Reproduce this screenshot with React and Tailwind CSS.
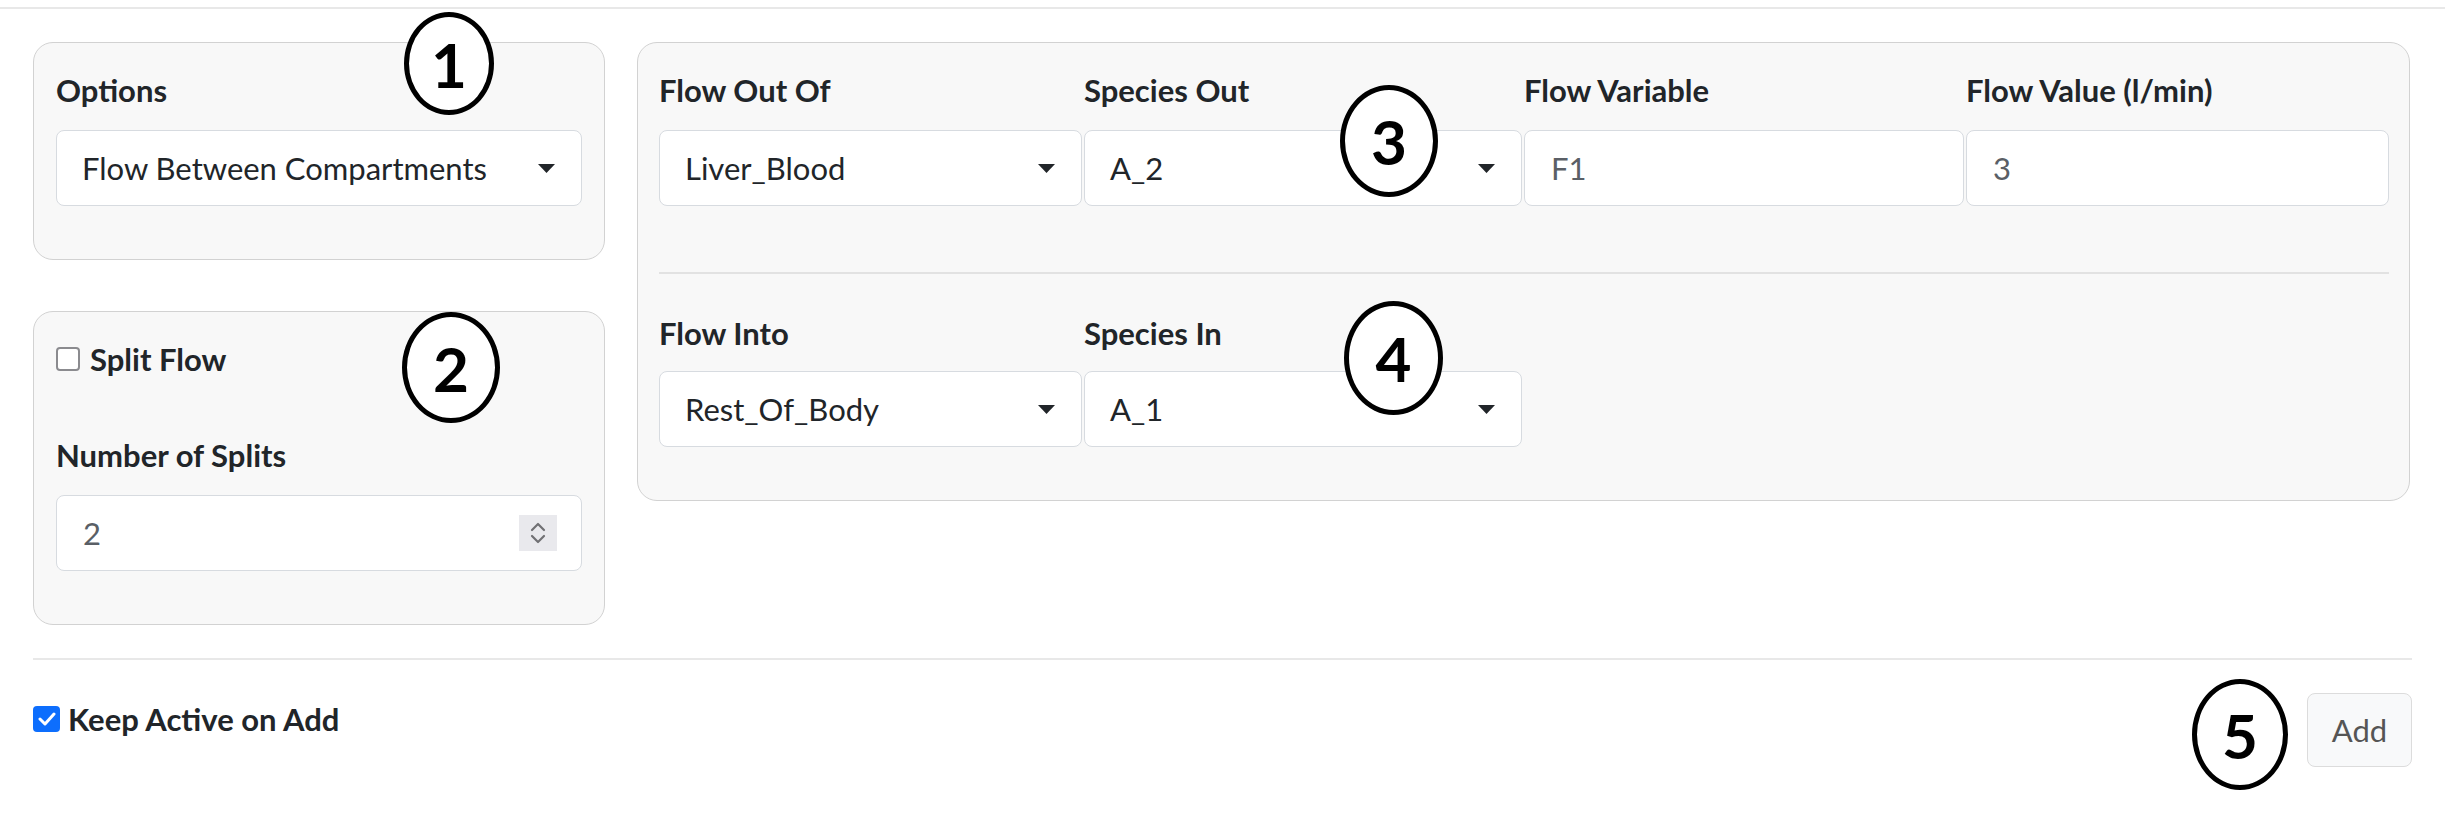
import React from 'react';

function Caret() {
  return (
    <svg width="17" height="9" viewBox="0 0 17 9">
      <path d="M0 0h17L8.5 9z" fill="#212529" />
    </svg>
  );
}

function Select({ value }) {
  return (
    <div className="flex h-[76px] items-center justify-between rounded-[8px] border border-[#d7dbe0] bg-white pl-[25px] pr-[26px] text-[31px] text-[#212529]">
      <span>{value}</span>
      <Caret />
    </div>
  );
}

function TextInput({ value, children }) {
  return (
    <div className="flex h-[76px] items-center justify-between rounded-[8px] border border-[#d7dbe0] bg-white pl-[26px] pr-[24px] text-[31px] text-[#5a5f66]">
      <span>{value}</span>
      {children}
    </div>
  );
}

function Label({ children }) {
  return <div className="text-[31px] font-bold leading-[36px] text-[#212529]">{children}</div>;
}

function Spinner() {
  return (
    <div className="flex h-[36px] w-[38px] items-center justify-center bg-[#e9e9ed]">
      <svg width="18" height="28" viewBox="0 0 18 28" fill="none" stroke="#707074" strokeWidth="2.2" strokeLinecap="round" strokeLinejoin="round">
        <path d="M3 11l6-6 6 6" />
        <path d="M3 17l6 6 6-6" />
      </svg>
    </div>
  );
}

function Marker({ n, className }) {
  return (
    <div
      className={`absolute flex items-center justify-center rounded-[50%] border-[5px] border-black bg-white text-[62px] font-bold leading-none text-black ${className}`}
    >
      {n}
    </div>
  );
}

export default function App() {
  return (
    <div className="relative h-[822px] w-[2445px] overflow-hidden bg-white [font-family:Lato,sans-serif]">
      <div className="h-[7px]" />
      <div className="border-t-2 border-[#e8e8e8]">
        {/* Top: option panels + flow panel */}
        <div className="flex gap-[32px] pl-[33px] pt-[33px]">
          <div className="flex w-[572px] flex-col gap-[51px]">
            <div className="h-[218px] rounded-[20px] border border-[#d2d2d2] bg-[#f8f8f8] px-[22px] pt-[29px]">
              <Label>Options</Label>
              <div className="mt-[22px]">
                <Select value="Flow Between Compartments" />
              </div>
            </div>
            <div className="h-[314px] rounded-[20px] border border-[#d2d2d2] bg-[#f8f8f8] px-[22px] pt-[29px]">
              <div className="flex h-[36px] items-center gap-[10px]">
                <div className="h-[24px] w-[24px] rounded-[4px] border-2 border-[#8b8b8f] bg-white" />
                <span className="text-[31px] font-bold text-[#212529]">Split Flow</span>
              </div>
              <div className="mt-[60px]">
                <Label>Number of Splits</Label>
              </div>
              <div className="mt-[22px]">
                <TextInput value="2">
                  <Spinner />
                </TextInput>
              </div>
            </div>
          </div>

          <div className="h-[459px] w-[1773px] rounded-[20px] border border-[#d2d2d2] bg-[#f8f8f8] pl-[21px] pr-[20px] pt-[29px]">
            <div className="grid grid-cols-[423px_438px_440px_423px] gap-x-[2px]">
              <Label>Flow Out Of</Label>
              <Label>Species Out</Label>
              <Label>Flow Variable</Label>
              <Label>Flow Value (l/min)</Label>
            </div>
            <div className="mt-[22px] grid grid-cols-[423px_438px_440px_423px] gap-x-[2px]">
              <Select value="Liver_Blood" />
              <Select value="A_2" />
              <TextInput value="F1" />
              <TextInput value="3" />
            </div>
            <div className="mt-[66px] h-[2px] bg-[#e2e2e2]" />
            <div className="mt-[41px] grid grid-cols-[423px_438px] gap-x-[2px]">
              <Label>Flow Into</Label>
              <Label>Species In</Label>
            </div>
            <div className="mt-[20px] grid grid-cols-[423px_438px] gap-x-[2px]">
              <Select value="Rest_Of_Body" />
              <Select value="A_1" />
            </div>
          </div>
        </div>

        {/* Footer */}
        <div className="mx-[33px] mt-[33px] border-t-2 border-[#e8e8e8]">
          <div className="flex items-start justify-between">
            <div className="mt-[41px] flex h-[36px] items-center gap-[8px]">
              <div className="flex h-[26px] w-[27px] items-center justify-center rounded-[4px] bg-[#0d6efd]">
                <svg width="18" height="14" viewBox="0 0 18 14" fill="none" stroke="white" strokeWidth="3" strokeLinecap="round" strokeLinejoin="round">
                  <path d="M2 7l5 5 9-10" />
                </svg>
              </div>
              <span className="text-[31px] font-bold text-[#212529]">Keep Active on Add</span>
            </div>
            <button className="mt-[33px] h-[74px] w-[105px] rounded-[8px] border border-[#dcdcdc] bg-[#f8f9fa] text-[31px] text-[#555]">
              Add
            </button>
          </div>
        </div>
      </div>

      <Marker n="1" className="left-[404px] top-[12px] h-[103px] w-[90px]" />
      <Marker n="2" className="left-[402px] top-[312px] h-[111px] w-[98px]" />
      <Marker n="3" className="left-[1340px] top-[85px] h-[112px] w-[98px]" />
      <Marker n="4" className="left-[1344px] top-[301px] h-[114px] w-[99px]" />
      <Marker n="5" className="left-[2192px] top-[679px] h-[111px] w-[96px]" />
    </div>
  );
}
